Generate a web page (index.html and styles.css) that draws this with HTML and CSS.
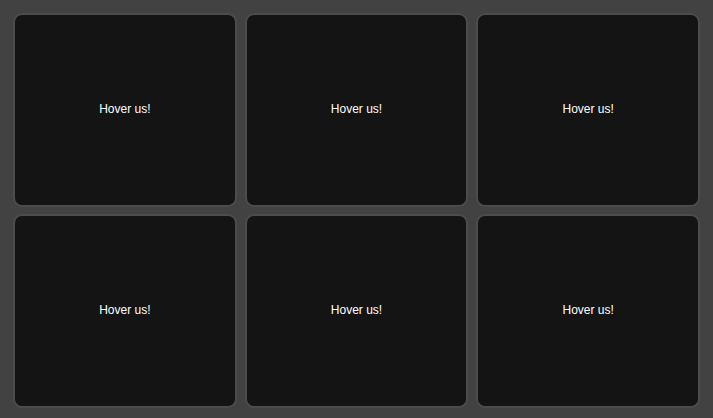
FILE: index.html
```html
<!DOCTYPE html>
<html>
<head>
<meta charset="utf-8">
<link rel="stylesheet" href="styles.css">
</head>
<body>
<div class="cards">
  <div class="card"><span class="label">Hover us!</span></div>
  <div class="card"><span class="label">Hover us!</span></div>
  <div class="card"><span class="label">Hover us!</span></div>
  <div class="card"><span class="label">Hover us!</span></div>
  <div class="card"><span class="label">Hover us!</span></div>
  <div class="card"><span class="label">Hover us!</span></div>
</div>
</body>
</html>
```
FILE: styles.css
```css
html, body {
  margin: 0;
  height: 100%;
}
body {
  background: #424242;
  font-family: "Liberation Sans", Arial, sans-serif;
  box-sizing: border-box;
  padding: 13px 13px 10px 13px;
}
.cards {
  height: 100%;
  display: grid;
  grid-template-columns: repeat(3, 1fr);
  grid-template-rows: repeat(2, 1fr);
  gap: 7px 8px;
}
.card {
  background: #141414;
  border: 2px solid #4c4c4c;
  border-radius: 9px;
  display: flex;
  align-items: center;
  justify-content: center;
  padding-bottom: 2px;
}
.label {
  color: #ffffff;
  font-size: 12px;
}
```
